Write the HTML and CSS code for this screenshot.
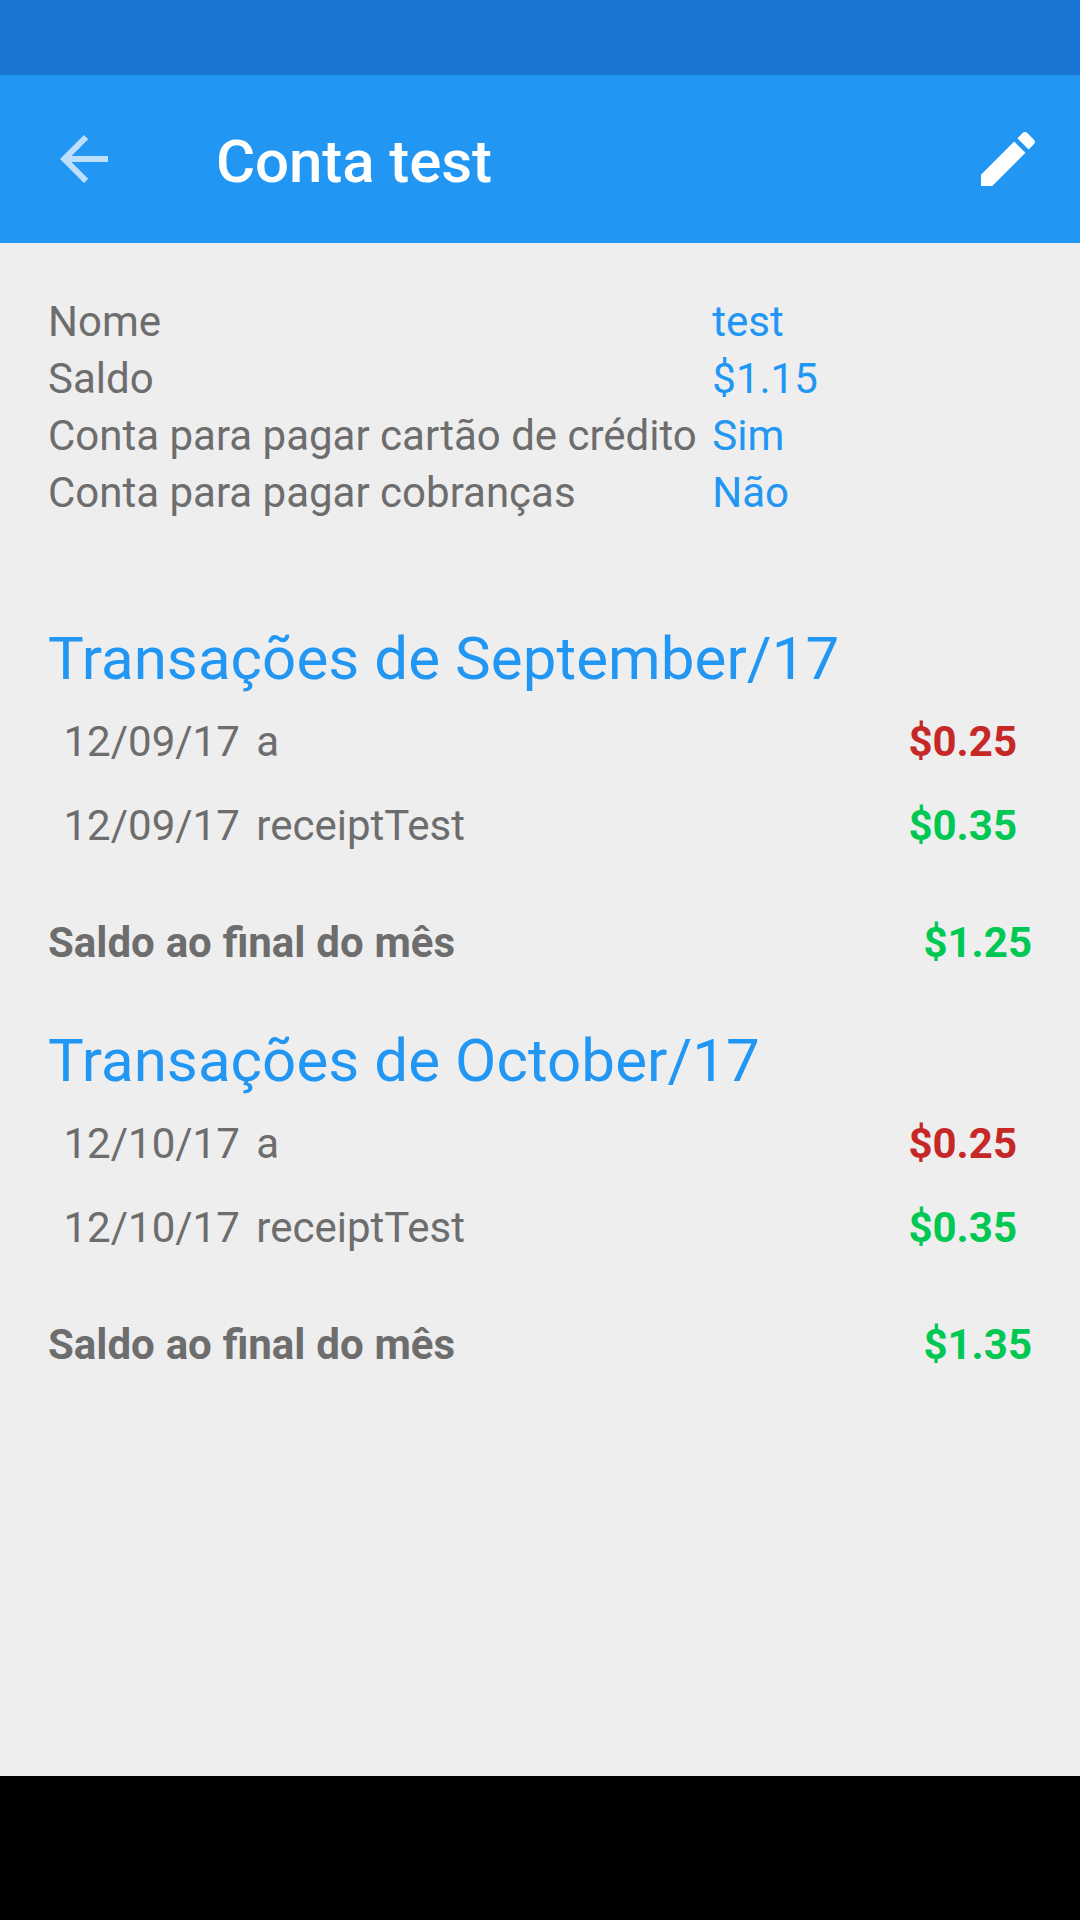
FILE: index.html
```html
<!DOCTYPE html>
<html lang="pt">
<head>
<meta charset="utf-8">
<title>Conta test</title>
<link rel="stylesheet" href="styles.css">
</head>
<body>
<div class="status-bar"></div>
<header class="toolbar">
  <svg class="icon-back" viewBox="0 0 24 24"><path d="M20 11H7.83l5.59-5.59L12 4l-8 8 8 8 1.41-1.41L7.83 13H20v-2z"/></svg>
  <h1 class="title">Conta test</h1>
  <svg class="icon-edit" viewBox="0 0 24 24"><path d="M3 17.25V21h3.75L17.81 9.94l-3.75-3.75L3 17.25zM20.71 7.04c.39-.39.39-1.02 0-1.41l-2.34-2.34c-.39-.39-1.02-.39-1.41 0l-1.83 1.83 3.75 3.75 1.83-1.83z"/></svg>
</header>
<main class="content">
  <dl class="details">
    <dt>Nome</dt><dd>test</dd>
    <dt>Saldo</dt><dd>$1.15</dd>
    <dt>Conta para pagar cartão de crédito</dt><dd>Sim</dd>
    <dt>Conta para pagar cobranças</dt><dd>Não</dd>
  </dl>
  <section class="month">
    <h2>Transações de September/17</h2>
    <div class="row"><span class="date">12/09/17</span><span class="name">a</span><span class="amount expense">$0.25</span></div>
    <div class="row"><span class="date">12/09/17</span><span class="name">receiptTest</span><span class="amount income">$0.35</span></div>
    <div class="total"><span class="label">Saldo ao final do mês</span><span class="amount income">$1.25</span></div>
  </section>
  <section class="month">
    <h2>Transações de October/17</h2>
    <div class="row"><span class="date">12/10/17</span><span class="name">a</span><span class="amount expense">$0.25</span></div>
    <div class="row"><span class="date">12/10/17</span><span class="name">receiptTest</span><span class="amount income">$0.35</span></div>
    <div class="total"><span class="label">Saldo ao final do mês</span><span class="amount income">$1.35</span></div>
  </section>
</main>
<div class="nav-bar"></div>
</body>
</html>
```
FILE: styles.css
```css
* { box-sizing: border-box; margin: 0; padding: 0; }
body {
  width: 1080px;
  height: 1920px;
  display: flex;
  flex-direction: column;
  overflow: hidden;
  background: #eeeeee;
  color: #6d6d6d;
  font: 42px/57px Roboto, sans-serif;
}
.status-bar { height: 75px; background: #1976d2; flex: none; }
.toolbar {
  height: 168px;
  flex: none;
  display: flex;
  align-items: center;
  padding: 0 36px 0 48px;
  background: #2196f3;
}
.icon-back { width: 72px; height: 72px; fill: #fff; opacity: .7; }
.title { margin-left: 96px; flex: 1; font-size: 60px; font-weight: 500; line-height: 72px; letter-spacing: -.1px; color: #fff; padding-top: 5px; }
.icon-edit { width: 72px; height: 72px; fill: #fff; }
.content { flex: 1; padding: 50px 48px 0; }
.details { display: grid; grid-template-columns: max-content 1fr; column-gap: 15.5px; margin-bottom: 98px; }
.details dd, h2 { color: #2196f3; }
h2 { font-size: 60px; font-weight: 400; line-height: 80px; letter-spacing: .08px; }
.month { height: 402px; }
.row { display: flex; height: 84px; align-items: center; padding: 0 15px 0 15.5px; }
.name { flex: 1; margin-left: 16.5px; }
.amount, .total { font-weight: 700; }
.total { display: flex; justify-content: space-between; margin-top: 47px; }
.label { word-spacing: .4px; }
.expense { color: #c62828; }
.income { color: #00c853; }
.nav-bar { height: 144px; background: #000; flex: none; }
```
